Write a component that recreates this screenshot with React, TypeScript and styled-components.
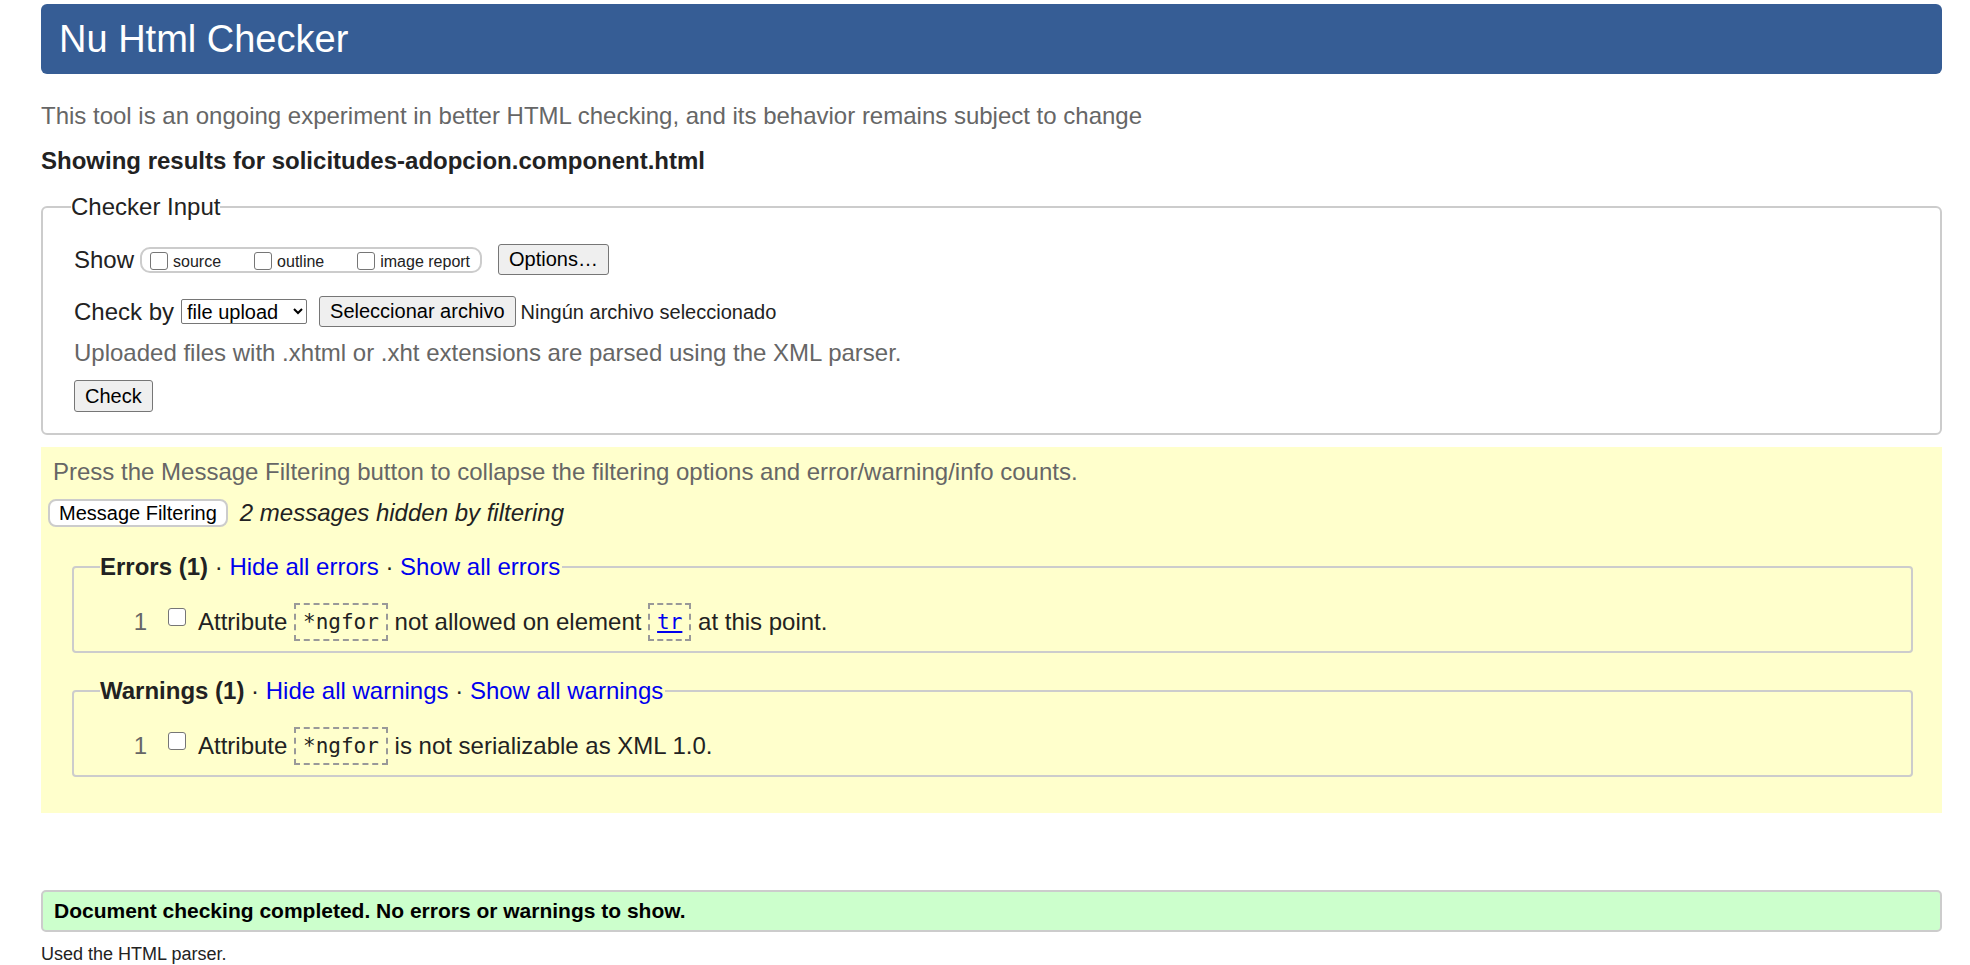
import styled, { createGlobalStyle } from 'styled-components'

const GlobalStyle = createGlobalStyle`
  html, body {
    margin: 0;
    padding: 0;
    background: #fff;
  }
  body {
    font-family: "Liberation Sans", Arial, sans-serif;
    color: #222;
  }
`

const Page = styled.div`
  padding: 4px 28px 0 41px;
`

const Header = styled.h1`
  margin: 0;
  height: 70px;
  padding: 0 18px;
  background: #365d95;
  color: #fff;
  font-size: 38px;
  font-weight: normal;
  line-height: 70px;
  border-radius: 6px;
`

const Intro = styled.p`
  margin: 27px 0 0;
  font-size: 24px;
  line-height: 30px;
  color: #666;
`

const Heading = styled.p`
  margin: 15px 0 0;
  font-size: 24px;
  line-height: 30px;
  font-weight: bold;
`

const Fieldset = styled.fieldset`
  margin: 16px 0 0;
  padding: 22px 0 21px 31px;
  border: 2px solid #ccc;
  border-radius: 6px;
  display: flex;
  flex-direction: column;
  align-items: flex-start;
  min-width: 0;
`

const Legend = styled.legend`
  margin-left: -3px;
  padding: 0;
  font-size: 24px;
  line-height: 30px;
`

const Row = styled.div<{ $gap?: number }>`
  display: flex;
  align-items: center;
  margin-top: ${p => p.$gap || 0}px;
  font-size: 24px;
  line-height: 30px;
`

const ToggleGroup = styled.div`
  display: flex;
  align-items: flex-end;
  height: 22px;
  margin-left: 6px;
  padding: 0 10px 0 8px;
  border: 2px solid #ccc;
  border-radius: 10px;
`

const Toggle = styled.label`
  display: flex;
  align-items: flex-end;
  font-size: 16px;
  line-height: 18px;
  margin-right: 33px;
  &:last-child {
    margin-right: 0;
  }
`

const Box = styled.input.attrs({ type: 'checkbox' })`
  appearance: none;
  box-sizing: border-box;
  flex: none;
  width: 18px;
  height: 18px;
  margin: 0 5px 1px 0;
  background: #fff;
  border: 1px solid #767676;
  border-radius: 3px;
`

const Button = styled.button<{ $gap?: number; $tall?: boolean }>`
  margin-left: ${p => p.$gap || 0}px;
  height: ${p => (p.$tall ? 32 : 31)}px;
  padding: 0 10px;
  background: #efefef;
  border: 1px solid #767676;
  border-radius: 3px;
  font-family: "Liberation Sans", Arial, sans-serif;
  font-size: 20px;
  color: #000;
`

const Select = styled.select`
  margin-left: 7px;
  height: 25px;
  width: 126px;
  padding: 0 1px;
  background: #fff;
  border: 1px solid #767676;
  border-radius: 2px;
  font-family: "Liberation Sans", Arial, sans-serif;
  font-size: 20px;
  color: #000;
`

const FileName = styled.span`
  margin-left: 5px;
  font-size: 20px;
`

const Hint = styled.p`
  margin: 11px 0 0;
  font-size: 24px;
  line-height: 30px;
  color: #666;
`

const Results = styled.section`
  margin-top: 12px;
  padding: 10px 0 36px 7px;
  background: #ffffcc;
`

const Notice = styled.p`
  margin: 0 0 0 5px;
  font-size: 24px;
  line-height: 30px;
  color: #666;
`

const FilterButton = styled.button`
  height: 28px;
  padding: 0 9px;
  background: #fff;
  border: 2px solid #ccc;
  border-radius: 8px;
  font-family: "Liberation Sans", Arial, sans-serif;
  font-size: 20px;
  color: #000;
`

const Hidden = styled.em`
  margin-left: 12px;
  font-size: 24px;
`

const Group = styled.fieldset<{ $gap: number }>`
  margin: ${p => p.$gap}px 29px 0 24px;
  padding: 20px 0 9px 26px;
  border: 2px solid #ccc;
  border-radius: 4px;
  min-width: 0;
`

const GroupLegend = styled.legend`
  padding: 0 2px 0 0;
  font-size: 24px;
  line-height: 30px;
  b {
    font-weight: bold;
  }
  a {
    color: #0000ee;
    text-decoration: none;
  }
`

const Message = styled.div`
  display: flex;
  align-items: flex-start;
  height: 40px;
  font-size: 24px;
  line-height: 40px;
`

const Num = styled.span`
  width: 47px;
  text-align: right;
  color: #666;
`

const MsgBox = styled(Box)`
  margin: 6px 12px 0 21px;
`

const Code = styled.code<{ $link?: boolean }>`
  display: inline-block;
  vertical-align: middle;
  margin-top: -4px;
  padding: 0 7px;
  height: 34px;
  line-height: 34px;
  border: 2px dashed #999;
  font-family: "DejaVu Sans Mono", "Liberation Mono", monospace;
  font-size: 21px;
  color: ${p => (p.$link ? '#0000ee' : '#222')};
  text-decoration: ${p => (p.$link ? 'underline' : 'none')};
`

const Done = styled.div`
  margin-top: 77px;
  padding: 0 11px;
  background: #ccffcc;
  border: 2px solid #ccc;
  border-radius: 5px;
  font-size: 21px;
  font-weight: bold;
  line-height: 38px;
  color: #000;
`

const Footnote = styled.p`
  margin: 12px 0 0;
  font-size: 18px;
  line-height: 20px;
`

const App = () => (
  <>
    <GlobalStyle />
    <Page>
      <Header>Nu Html Checker</Header>
      <Intro>This tool is an ongoing experiment in better HTML checking, and its behavior remains subject to change</Intro>
      <Heading>Showing results for solicitudes-adopcion.component.html</Heading>

      <Fieldset>
        <Legend>Checker Input</Legend>
        <Row>
          Show
          <ToggleGroup>
            <Toggle><Box />source</Toggle>
            <Toggle><Box />outline</Toggle>
            <Toggle><Box />image report</Toggle>
          </ToggleGroup>
          <Button $gap={16}>Options…</Button>
        </Row>
        <Row $gap={21}>
          Check by
          <Select defaultValue="file">
            <option value="file">file upload</option>
          </Select>
          <Button $gap={12}>Seleccionar archivo</Button>
          <FileName>Ningún archivo seleccionado</FileName>
        </Row>
        <Hint>Uploaded files with .xhtml or .xht extensions are parsed using the XML parser.</Hint>
        <Row $gap={12}>
          <Button $tall>Check</Button>
        </Row>
      </Fieldset>

      <Results>
        <Notice>Press the Message Filtering button to collapse the filtering options and error/warning/info counts.</Notice>
        <Row $gap={11}>
          <FilterButton>Message Filtering</FilterButton>
          <Hidden>2 messages hidden by filtering</Hidden>
        </Row>

        <Group $gap={24}>
          <GroupLegend>
            <b>Errors (1)</b> · <a href="#">Hide all errors</a> · <a href="#">Show all errors</a>
          </GroupLegend>
          <Message>
            <Num>1</Num>
            <MsgBox />
            <span>
              Attribute <Code>*ngfor</Code> not allowed on element <Code $link>tr</Code> at this point.
            </span>
          </Message>
        </Group>

        <Group $gap={23}>
          <GroupLegend>
            <b>Warnings (1)</b> · <a href="#">Hide all warnings</a> · <a href="#">Show all warnings</a>
          </GroupLegend>
          <Message>
            <Num>1</Num>
            <MsgBox />
            <span>
              Attribute <Code>*ngfor</Code> is not serializable as XML 1.0.
            </span>
          </Message>
        </Group>
      </Results>

      <Done>Document checking completed. No errors or warnings to show.</Done>
      <Footnote>Used the HTML parser.</Footnote>
    </Page>
  </>
)

export default App
